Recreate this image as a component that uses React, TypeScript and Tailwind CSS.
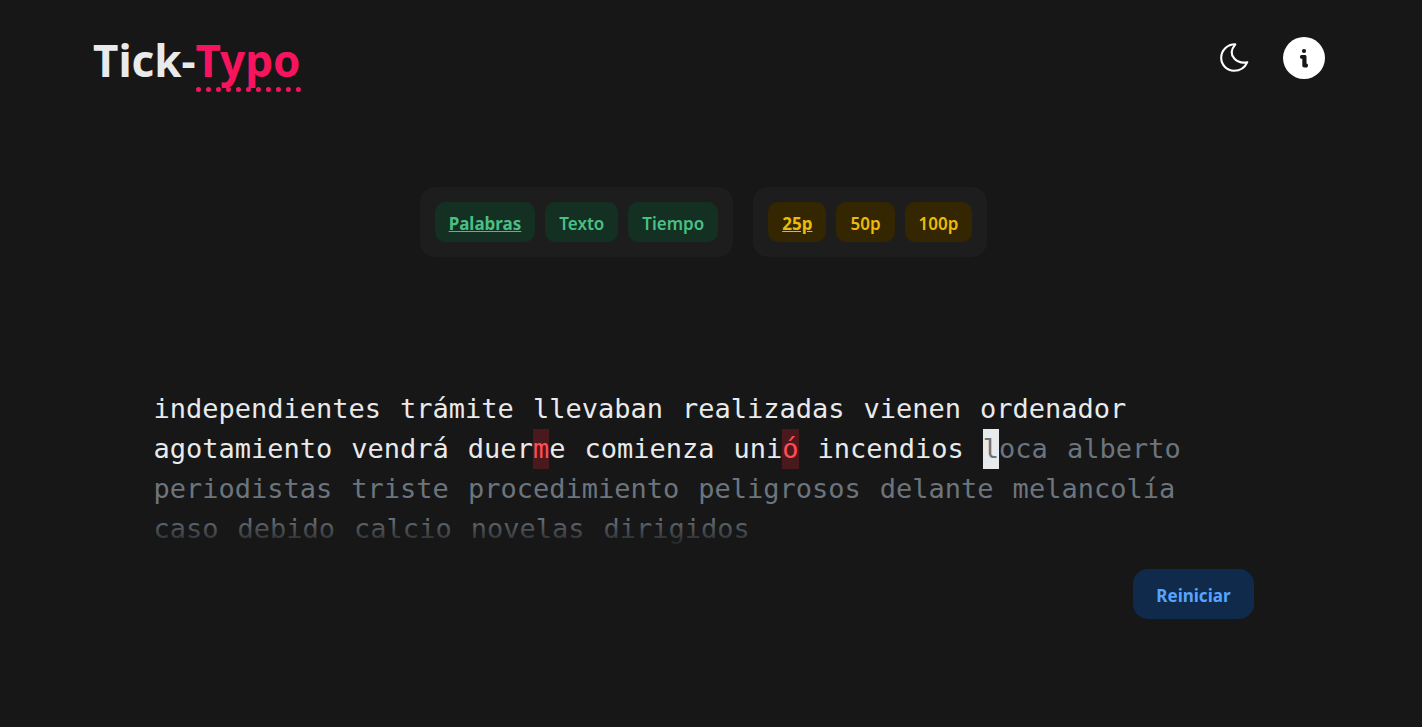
import { useState } from "react";

const words: { text: string; wrong?: number }[] = [
  ..."independientes trámite llevaban realizadas vienen ordenador agotamiento vendrá"
    .split(" ")
    .map((text) => ({ text })),
  { text: "duerme", wrong: 4 },
  { text: "comienza" },
  { text: "unió", wrong: 3 },
  { text: "incendios" },
];

const pending =
  "loca alberto periodistas triste procedimiento peligrosos delante melancolía caso debido calcio novelas dirigidos".split(" ");

const modes = ["Palabras", "Texto", "Tiempo"];
const amounts = ["25p", "50p", "100p"];

type OptionGroupProps = {
  label: string;
  options: string[];
  value: string;
  onChange: (value: string) => void;
  tone: string;
};

function OptionGroup({ label, options, value, onChange, tone }: OptionGroupProps) {
  return (
    <div role="group" aria-label={label} className="flex gap-2.5 rounded-[15px] bg-[#1d1d1d] p-[15px]">
      {options.map((option) => (
        <button
          key={option}
          type="button"
          aria-pressed={option === value}
          onClick={() => onChange(option)}
          className={`h-10 rounded-[10px] px-3.5 pt-1 text-[17px] ${tone} ${
            option === value ? "font-bold underline" : "font-semibold"
          }`}
        >
          {option}
        </button>
      ))}
    </div>
  );
}

function MoonIcon() {
  return (
    <svg
      width="40"
      height="40"
      viewBox="0 0 40 40"
      fill="none"
      stroke="currentColor"
      strokeWidth="2.1"
      strokeLinejoin="round"
      aria-hidden="true"
    >
      <path d="M20.3 6.3C12.2 6.2 6.2 12.4 6.2 19.8c0 7.2 5.8 13 12.8 13 6.4 0 11-3.3 13.3-8.6-5.3 1.1-9.8-.2-13-3.7-3.4-3.7-3.3-9 1-14.2Z" />
    </svg>
  );
}

function InfoIcon() {
  return (
    <svg width="24" height="28" viewBox="0 0 24 28" fill="currentColor" aria-hidden="true">
      <circle cx="12" cy="7" r="2.1" />
      <path d="M9.6 11.1h3.2c1 0 1.7.7 1.7 1.7v6.8c.9 0 1.5.7 1.5 1.8s-.7 2.2-1.9 2.2h-1.8c-1.3 0-2-.8-2-2v-6.9h-.7c-.9 0-1.6-.8-1.6-1.8s.7-1.8 1.6-1.8Z" />
    </svg>
  );
}

export default function App() {
  const [mode, setMode] = useState("Palabras");
  const [amount, setAmount] = useState("25p");

  return (
    <div className="min-h-screen bg-[#171717] pr-[15px] font-['Noto_Sans',sans-serif] text-[#e9eaec]">
      <header className="flex items-start justify-between pt-[30px] pr-[82px] pl-[93px]">
        <h1 className="pt-[3px] text-[44px] leading-[54px] font-bold">
          Tick-
          <span className="inline-block border-b-[5px] border-dotted border-[#f7145f] text-[#f7145f]">Typo</span>
        </h1>
        <div className="flex items-center gap-7 pt-[7px]">
          <button type="button" aria-label="Cambiar tema" className="text-white">
            <MoonIcon />
          </button>
          <button
            type="button"
            aria-label="Información"
            className="flex size-[42px] items-center justify-center rounded-full bg-white text-[#171717]"
          >
            <InfoIcon />
          </button>
        </div>
      </header>

      <main>
        <div className="mt-[95px] flex flex-wrap justify-center gap-5">
          <OptionGroup label="Modo" options={modes} value={mode} onChange={setMode} tone="bg-[#133022] text-[#4abf85]" />
          <OptionGroup label="Cantidad" options={amounts} value={amount} onChange={setAmount} tone="bg-[#332600] text-[#ecb90c]" />
        </div>

        <div className="mx-auto mt-[132px] max-w-[1100px]">
          <div className="relative">
            <p className="flex flex-wrap gap-x-[19px] font-['DejaVu_Sans_Mono',monospace] text-[27px] leading-10">
              {words.map(({ text, wrong }) => (
                <span key={text}>
                  {wrong === undefined ? (
                    text
                  ) : (
                    <>
                      {text.slice(0, wrong)}
                      <span className="inline-block bg-[#4a191d] text-[#ff4d55]">{text[wrong]}</span>
                      {text.slice(wrong + 1)}
                    </>
                  )}
                </span>
              ))}
              {pending.map((text, i) => (
                <span key={text} className="text-[#6c757d]">
                  {i === 0 ? <span className="inline-block bg-[#e9eaec]">{text[0]}</span> : text[0]}
                  {text.slice(1)}
                </span>
              ))}
            </p>
            <div className="pointer-events-none absolute inset-x-0 bottom-0 h-8 bg-linear-to-b from-transparent to-[#171717]" />
          </div>
          <div className="mt-5 flex justify-end">
            <button
              type="button"
              className="h-[50px] rounded-[15px] bg-[#102a4c] px-[23px] pt-1 text-[17px] font-bold text-[#56a4ff]"
            >
              Reiniciar
            </button>
          </div>
        </div>
      </main>
    </div>
  );
}
